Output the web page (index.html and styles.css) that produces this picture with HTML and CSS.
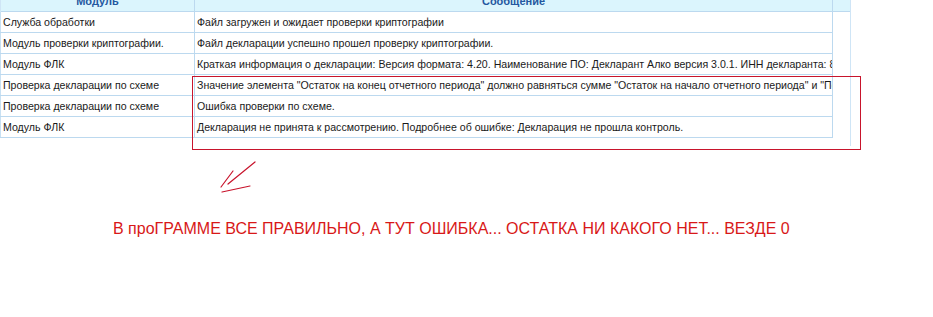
FILE: index.html
```html
<!DOCTYPE html>
<html lang="ru">
<head>
<meta charset="utf-8">
<title>Протокол</title>
<link rel="stylesheet" href="styles.css">
</head>
<body>
<div class="frame">
  <div class="head">
    <div class="hcell">Модуль</div>
    <div class="hcell">Сообщение</div>
    <div class="hgutter"></div>
  </div>
  <div class="rows">
    <div class="row"><div class="c1">Служба обработки</div><div class="c2">Файл загружен и ожидает проверки криптографии</div></div>
    <div class="row"><div class="c1">Модуль проверки криптографии.</div><div class="c2">Файл декларации успешно прошел проверку криптографии.</div></div>
    <div class="row"><div class="c1">Модуль ФЛК</div><div class="c2">Краткая информация о декларации: Версия формата: 4.20. Наименование ПО: Декларант Алко версия 3.0.1. ИНН декларанта: 8888888888</div></div>
    <div class="row"><div class="c1">Проверка декларации по схеме</div><div class="c2">Значение элемента "Остаток на конец отчетного периода" должно равняться сумме "Остаток на начало отчетного периода" и "Поступления"</div></div>
    <div class="row"><div class="c1">Проверка декларации по схеме</div><div class="c2">Ошибка проверки по схеме.</div></div>
    <div class="row"><div class="c1">Модуль ФЛК</div><div class="c2">Декларация не принята к рассмотрению. Подробнее об ошибке: Декларация не прошла контроль.</div></div>
  </div>
</div>
<div class="mark"></div>
<svg class="arrow" width="60" height="50" viewBox="210 150 60 50">
  <path d="M255 162 L228 184 M233 171 L221 187 M222 192 L250 186" fill="none" stroke="#c8142c" stroke-width="1.2" stroke-linecap="round"/>
</svg>
<p class="note">В проГРАММЕ ВСЕ ПРАВИЛЬНО, А ТУТ ОШИБКА... ОСТАТКА НИ КАКОГО НЕТ... ВЕЗДЕ 0</p>
</body>
</html>
```
FILE: styles.css
```css
html, body {
  margin: 0;
  padding: 0;
  background: #fff;
}
body {
  font-family: "Liberation Sans", Arial, sans-serif;
  font-size: 10.6px;
  color: #1a1a1a;
  position: relative;
  width: 933px;
  height: 317px;
  overflow: hidden;
}
.frame {
  margin-top: -10px;
  width: 850px;
  height: 156px;
  border-right: 1px solid #cfe5f6;
  box-sizing: content-box;
}
.head {
  display: grid;
  grid-template-columns: 194px 638px 18px;
  height: 21px;
  background: #dbf5fd;
  border-bottom: 1px solid #bcd9ef;
}
.hcell {
  font-size: 11px;
  font-weight: bold;
  color: #2458a0;
  text-align: center;
  line-height: 22px;
  border-left: 1px solid #bcd9ef;
}
.hcell:first-child {
  border-left: 1px solid #cfe5f6;
}
.hgutter {
  border-left: 1px solid #bcd9ef;
}
.rows {
  width: 833px;
}
.row {
  display: grid;
  grid-template-columns: 194px 639px;
  height: 20px;
  border-bottom: 1px solid #bcd9ef;
}
.c1, .c2 {
  line-height: 20px;
  padding-left: 2px;
  white-space: nowrap;
  overflow: hidden;
}
.c1 {
  border-left: 1px solid #c8e0f2;
}
.c2 {
  border-left: 1px solid #bcd9ef;
  border-right: 1px solid #bcd9ef;
}
.mark {
  position: absolute;
  left: 192px;
  top: 76px;
  width: 667px;
  height: 72px;
  border: 1px solid #c8142c;
}
.arrow {
  position: absolute;
  left: 210px;
  top: 150px;
}
.note {
  margin: 74px 0 0 113px;
  font-size: 16px;
  line-height: 18px;
  color: #d81818;
  white-space: nowrap;
}
```
